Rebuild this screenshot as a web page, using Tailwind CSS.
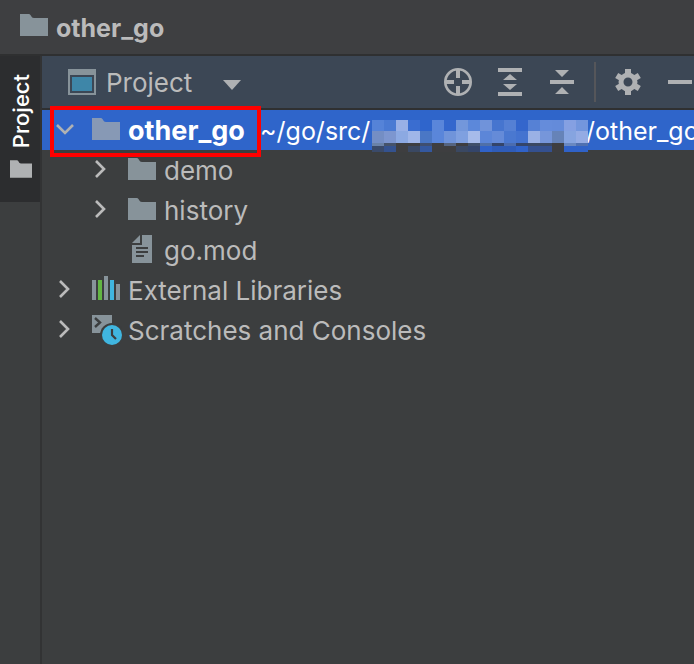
<!DOCTYPE html>
<html lang="en">
<head>
    <meta charset="UTF-8">
    <meta name="viewport" content="width=device-width, initial-scale=1.0">
    <title>other_go</title>
    <script src="https://cdn.jsdelivr.net/npm/@tailwindcss/browser@4"></script>
</head>
<body class="flex h-screen flex-col overflow-hidden bg-[#3c3e3f] font-['Inter',sans-serif] text-[26px] leading-9 text-[#bbbbbb]">
    <svg class="hidden">
        <symbol id="folder" viewBox="0 0 28 22">
            <path d="M0 0H9C11 0 11 4 14 4H28V22H0Z" fill="currentColor"/>
        </symbol>
        <symbol id="chevron" viewBox="0 0 12 20">
            <path d="M2 2L10 10L2 18" fill="none" stroke="currentColor" stroke-width="2.6"/>
        </symbol>
    </svg>

    <!-- Navigation bar -->
    <header class="flex h-14 shrink-0 items-center gap-2 border-b-2 border-[#2f3031] bg-[#3e3f41] pl-5">
        <svg class="h-[22px] w-7 -translate-y-0.5 text-[#87939a]"><use href="#folder"/></svg>
        <h1 class="pt-0.5 text-[25px] font-bold">other_go</h1>
    </header>

    <div class="flex min-h-0 flex-1">
        <!-- Tool window stripe -->
        <nav class="w-[42px] shrink-0 border-r-2 border-[#323334]">
            <button class="flex h-[146px] w-full flex-col items-center gap-3 bg-[#2c2d2f] pt-[18px] pl-0.5 text-white">
                <span class="rotate-180 text-[22px] leading-7 font-medium [writing-mode:vertical-rl]">Project</span>
                <svg class="h-[18px] w-[22px] text-[#afb1b3]"><use href="#folder"/></svg>
            </button>
        </nav>

        <main class="min-w-0 flex-1">
            <div class="flex h-[54px] items-center border-b-2 border-[#2f3031] bg-[#3c4755] pl-[26px]">
                <svg class="mr-2.5 h-[26px] w-7 shrink-0" viewBox="0 0 28 26">
                    <path d="M0 0H28V26H0ZM2 6V24H26V6Z" fill="#87939a" fill-rule="evenodd"/>
                    <rect x="4" y="8" width="20" height="14" fill="#3e86a8"/>
                </svg>
                <div class="relative shrink-0">
                    <select aria-label="Project view" class="block h-10 w-[135px] appearance-none bg-transparent pt-0.5">
                        <option>Project</option>
                    </select>
                    <svg class="pointer-events-none absolute top-[18px] right-0 h-2.5 w-[18px]" viewBox="0 0 18 10">
                        <path d="M0 0H18L9 10Z" fill="#afb1b3"/>
                    </svg>
                </div>
                <div class="ml-auto flex shrink-0 items-center gap-6 text-[#afb1b3]">
                    <button aria-label="Select opened file">
                        <svg class="h-7 w-7" viewBox="0 0 28 28" fill="none" stroke="currentColor">
                            <circle cx="14" cy="14" r="12.7" stroke-width="2.6"/>
                            <path d="M14 2V10M14 18V26M2 14H10M18 14H26" stroke-width="4"/>
                        </svg>
                    </button>
                    <button aria-label="Expand all">
                        <svg class="h-7 w-7" viewBox="0 0 28 28" fill="currentColor">
                            <path d="M2 0H26V4H2ZM2 24H26V28H2ZM7 12L14 6L21 12ZM7 16H21L14 22Z"/>
                        </svg>
                    </button>
                    <button aria-label="Collapse all">
                        <svg class="h-7 w-7" viewBox="0 0 28 28" fill="currentColor">
                            <path d="M2 12H26V16H2ZM7 2H21L14 9ZM7 26L14 19L21 26Z"/>
                        </svg>
                    </button>
                    <div class="-mx-1.5 h-10 w-0.5 bg-[#55565a]"></div>
                    <button aria-label="Options">
                        <svg class="h-7 w-7" viewBox="0 0 28 28" fill="none" stroke="currentColor">
                            <circle cx="14" cy="14" r="7" stroke-width="5"/>
                            <path d="M14 1V6M14 22V27M2.7 7.5L7 10M21 18L25.3 20.5M2.7 20.5L7 18M21 10L25.3 7.5" stroke-width="6"/>
                        </svg>
                    </button>
                    <button aria-label="Hide">
                        <svg class="h-7 w-7" viewBox="0 0 28 28"><path d="M2 12H26V16H2Z" fill="currentColor"/></svg>
                    </button>
                </div>
            </div>

            <!-- Project tree -->
            <div class="relative">
                <ul>
                    <li class="relative flex h-10 items-center bg-[#2f65ca] pb-0.5 whitespace-nowrap text-white">
                        <button aria-label="Collapse other_go" class="ml-3 w-[22px] shrink-0 text-[#afb1b3]">
                            <svg class="mx-auto h-5 w-3 rotate-90"><use href="#chevron"/></svg>
                        </button>
                        <svg class="mr-2 ml-4 h-[22px] w-7 shrink-0 text-[#8799b5]"><use href="#folder"/></svg>
                        <span class="w-[132px] shrink-0 pt-1 text-[27px] font-bold">other_go</span>
                        <span class="w-[326px] shrink-0 pt-1 text-[25px]">~/go/src/</span>
                        <span class="pt-1 text-[25px]">/other_go</span>
                        <svg id="mosaic" class="absolute top-2.5 left-[330px] h-8 w-[216px]" viewBox="0 0 216 32" shape-rendering="crispEdges"></svg>
                    </li>
                    <li class="flex h-10 items-center pb-0.5">
                        <button aria-label="Expand demo" class="ml-12 w-5 shrink-0">
                            <svg class="mx-auto h-5 w-3"><use href="#chevron"/></svg>
                        </button>
                        <svg class="mr-2 ml-[18px] h-[22px] w-7 text-[#87939a]"><use href="#folder"/></svg>
                        <span class="pt-1">demo</span>
                    </li>
                    <li class="flex h-10 items-center pb-0.5">
                        <button aria-label="Expand history" class="ml-12 w-5 shrink-0">
                            <svg class="mx-auto h-5 w-3"><use href="#chevron"/></svg>
                        </button>
                        <svg class="mr-2 ml-[18px] h-[22px] w-7 text-[#87939a]"><use href="#folder"/></svg>
                        <span class="pt-1">history</span>
                    </li>
                    <li class="flex h-10 items-center pb-0.5">
                        <svg class="mr-2 ml-[86px] h-7 w-7" viewBox="0 0 28 28">
                            <path d="M14 0H24V28H4V10H14ZM4 8L12 0V8Z" fill="#87939a"/>
                            <path d="M8 13H20M8 17H20M8 21H16" stroke="#3c3e3f" stroke-width="2"/>
                        </svg>
                        <span class="pt-1">go.mod</span>
                    </li>
                    <li class="flex h-10 items-center pb-0.5">
                        <button aria-label="Expand External Libraries" class="ml-3 w-5 shrink-0">
                            <svg class="mx-auto h-5 w-3"><use href="#chevron"/></svg>
                        </button>
                        <svg class="mr-2 ml-[18px] h-7 w-7" viewBox="0 0 28 28">
                            <path d="M0 5H4V25H0ZM12 1H16V25H12ZM24 9H28V25H24Z" fill="#87939a"/>
                            <path d="M6 5H10V25H6Z" fill="#62b543"/>
                            <path d="M18 5H22V25H18Z" fill="#40b6e0"/>
                        </svg>
                        <span class="pt-1">External Libraries</span>
                    </li>
                    <li class="flex h-10 items-center pb-0.5">
                        <button aria-label="Expand Scratches and Consoles" class="ml-3 w-5 shrink-0">
                            <svg class="mx-auto h-5 w-3"><use href="#chevron"/></svg>
                        </button>
                        <svg class="mr-1.5 ml-[18px] h-8 w-[30px]" viewBox="0 -2 30 32">
                            <path d="M0 0H20V18H0Z" fill="#87939a"/>
                            <path d="M3 3L8 7.5L3 12" fill="none" stroke="#3c3e3f" stroke-width="2.4"/>
                            <circle cx="20" cy="20" r="12" fill="#3c3e3f"/>
                            <circle cx="20" cy="20" r="10" fill="#40b6e0"/>
                            <path d="M20 14V20L24 24" fill="none" stroke="#3c3e3f" stroke-width="2.2"/>
                        </svg>
                        <span class="pt-1">Scratches and Consoles</span>
                    </li>
                </ul>
                <div class="pointer-events-none absolute -top-1 left-2 h-[51px] w-[211px] border-4 border-[#ff0000]"></div>
            </div>
        </main>
    </div>

    <script>
        // Pixelated part of the path: [top, height, one colour per 12px cell]
        const rows = [
            [0, 11, '5583d8 4a7ad3 99b0e6 3a6dd0 2f65cc 5a86da 3467cd 7397db 5c88da 7093da 4675cf 5580d4 3466cc 5681d5 658cdb 648bda 85a0e2 7396dd'],
            [11, 12, '748ec4 7d96cf 8ca9e2 a0b6e8 4a77c5 5a86da 7094da 7fa0e0 a6bbea 5c86d8 658bd8 4a78d0 4473d0 9ab1e5 7696da 6683b8 86a4e0 94abe4'],
            [23, 3, '6a82a8 45536b 3e3e40 3e3e40 3f4f70 3e3e40 556582 3e3e40 40506a 5070a8 34456a 4a6cb0 34456a 3a4862 3a4862 3e3e40 6a88c0 5070b0'],
            [26, 6, '3a4a6a 34528f 3e3e40 3a4862 34589f 3e3e40 3e3e40 3a4862 34456a 3062c8 2f5cb8 2f5cb8 3062c8 34508f 34508f 3e3e40 3062c8 3062c8']
        ];

        document.getElementById('mosaic').innerHTML = rows.map(([y, h, colors]) =>
            colors.split(' ').map((c, i) => `<rect x="${i * 12}" y="${y}" width="12" height="${h}" fill="#${c}"/>`).join('')
        ).join('');
    </script>
</body>
</html>
